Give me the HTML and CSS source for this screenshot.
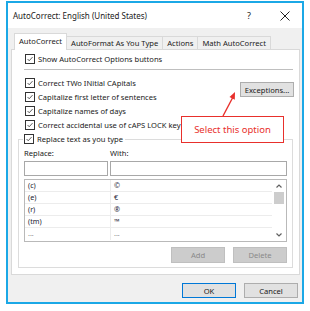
FILE: index.html
```html
<!DOCTYPE html>
<html>
<head>
<meta charset="utf-8">
<link rel="stylesheet" href="styles.css">
</head>
<body>
<div class="window">
  <div class="titlebar">
    <span class="title">AutoCorrect: English (United States)</span>
    <span class="help">?</span>
    <svg class="close" width="10" height="10" viewBox="0 0 10 10"><path d="M0.5 0.5 L9.5 9.5 M9.5 0.5 L0.5 9.5" stroke="#222" stroke-width="1" fill="none"/></svg>
  </div>
  <div class="tabs">
    <div class="tab selected">AutoCorrect</div>
    <div class="tab">AutoFormat As You Type</div>
    <div class="tab">Actions</div>
    <div class="tab">Math AutoCorrect</div>
  </div>
  <div class="panel">
    <div class="check-row show-row"><span class="cb"><svg width="10" height="10" viewBox="0 0 10 10"><path d="M2 5 L4 7.2 L8.2 2.6" stroke="#333" stroke-width="1" fill="none"/></svg></span>Show AutoCorrect Options buttons</div>
    <div class="sep"></div>
    <div class="options">
      <div class="option-list">
        <div class="check-row"><span class="cb"><svg width="10" height="10" viewBox="0 0 10 10"><path d="M2 5 L4 7.2 L8.2 2.6" stroke="#333" stroke-width="1" fill="none"/></svg></span>Correct TWo INitial CApitals</div>
        <div class="check-row"><span class="cb"><svg width="10" height="10" viewBox="0 0 10 10"><path d="M2 5 L4 7.2 L8.2 2.6" stroke="#333" stroke-width="1" fill="none"/></svg></span>Capitalize first letter of sentences</div>
        <div class="check-row"><span class="cb"><svg width="10" height="10" viewBox="0 0 10 10"><path d="M2 5 L4 7.2 L8.2 2.6" stroke="#333" stroke-width="1" fill="none"/></svg></span>Capitalize names of days</div>
        <div class="check-row"><span class="cb"><svg width="10" height="10" viewBox="0 0 10 10"><path d="M2 5 L4 7.2 L8.2 2.6" stroke="#333" stroke-width="1" fill="none"/></svg></span>Correct accidental use of cAPS LOCK key</div>
      </div>
      <div class="btn exceptions">Exceptions...</div>
    </div>
    <fieldset class="group">
      <legend class="check-row legend"><span class="cb"><svg width="10" height="10" viewBox="0 0 10 10"><path d="M2 5 L4 7.2 L8.2 2.6" stroke="#333" stroke-width="1" fill="none"/></svg></span>Replace text as you type</legend>
      <div class="labels"><span class="lbl-replace">Replace:</span><span>With:</span></div>
      <div class="inputs"><div class="input in-replace"></div><div class="input in-with"></div></div>
      <div class="list">
        <div class="rows">
          <div class="row"><span class="c1">(c)</span><span class="c2">©</span></div>
          <div class="row"><span class="c1">(e)</span><span class="c2">€</span></div>
          <div class="row"><span class="c1">(r)</span><span class="c2">®</span></div>
          <div class="row"><span class="c1">(tm)</span><span class="c2">™</span></div>
          <div class="row faint"><span class="c1">...</span><span class="c2">...</span></div>
        </div>
        <div class="scrollbar">
          <svg width="14" height="8" viewBox="0 0 14 8"><path d="M4.5 5.5 L7 3 L9.5 5.5" stroke="#606060" stroke-width="1.2" fill="none"/></svg>
          <div class="thumb"></div>
          <svg class="down" width="14" height="8" viewBox="0 0 14 8"><path d="M4.5 2.5 L7 5 L9.5 2.5" stroke="#606060" stroke-width="1.2" fill="none"/></svg>
        </div>
      </div>
      <div class="group-buttons">
        <div class="btn disabled">Add</div>
        <div class="btn disabled">Delete</div>
      </div>
    </fieldset>
  </div>
  <div class="dialog-buttons">
    <div class="btn ok">OK</div>
    <div class="btn">Cancel</div>
  </div>
  <div class="callout">Select this option</div>
  <svg class="arrow" width="20" height="26" viewBox="0 0 20 26"><path d="M3 25 L13 6" stroke="#e8302c" stroke-width="1.4" fill="none"/><path d="M15 1 L9.5 6 L14.8 8.8 Z" fill="#e8302c"/></svg>
</div>
</body>
</html>
```
FILE: styles.css
```css
* { box-sizing: border-box; }
html, body { margin: 0; padding: 0; background: #fff; }
body {
  font-family: "Noto Sans", "Open Sans", sans-serif;
  font-size: 7.6px;
  color: #1a1a1a;
}
.window {
  position: relative;
  margin: 1px 0 0 6px;
  width: 298px;
  height: 303px;
  border: 2px solid #1ba8e6;
  background: #f0f0f0;
  display: flex;
  flex-direction: column;
}
.titlebar {
  height: 25px;
  background: #fff;
  display: flex;
  align-items: center;
  padding-left: 5px;
  font-size: 8px;
  flex: none;
}
.title { flex: 1; }
.help { width: 12px; margin-right: 21px; font-size: 9px; }
.close { margin-right: 12px; }
.tabs {
  display: flex;
  align-items: flex-end;
  margin-top: 5px;
  padding-left: 6px;
  height: 16px;
  flex: none;
  position: relative;
  z-index: 1;
  white-space: nowrap;
}
.tab {
  height: 13px;
  line-height: 12px;
  padding: 0 4px;
  border: 1px solid #d9d9d9;
  border-bottom: none;
  background: #f0f0f0;
  margin-left: -1px;
}
.tab.selected {
  height: 17px;
  line-height: 15px;
  background: #fff;
  margin-left: 0;
  margin-bottom: -1px;
  padding: 0 4px;
  position: relative;
  z-index: 2;
}
.panel {
  margin: 0 2px 0 3px;
  height: 226px;
  background: #fff;
  border: 1px solid #d9d9d9;
  padding: 2px 6px 0 6px;
  flex: none;
}
.check-row {
  display: flex;
  align-items: center;
  height: 14px;
  line-height: 14px;
  padding-left: 7px;
  white-space: nowrap;
}
.cb {
  width: 10px;
  height: 10px;
  border: 1px solid #333;
  margin-right: 3px;
  display: flex;
  align-items: center;
  justify-content: center;
  flex: none;
}
.cb svg { display: block; }
.sep {
  margin: 3px 0 6px 6px;
  height: 1px;
  background: #bfbfbf;
}
.options {
  display: flex;
  justify-content: space-between;
  align-items: flex-start;
}
.exceptions {
  margin-top: 6px;
  margin-right: -1px;
  width: 59px;
  height: 16px;
}
.btn {
  display: flex;
  align-items: center;
  justify-content: center;
  background: #e1e1e1;
  border: 1px solid #adadad;
  height: 15px;
  width: 54px;
  font-size: 7.6px;
}
.btn.ok { border-color: #0078d7; }
.btn.disabled { background: #cccccc; border-color: #bfbfbf; color: #8a8a8a; }
.group {
  margin: 0;
  padding: 0 5px 5px 5px;
  border: 1px solid #dcdcdc;
  height: 136px;
  min-width: 0;
}
.legend {
  padding: 0 2px 0 1px;
  margin-left: -1px;
}
.labels {
  display: flex;
  margin-top: 1px;
  height: 13px;
  line-height: 13px;
}
.lbl-replace { width: 86px; }
.inputs {
  display: flex;
  gap: 2px;
  margin-top: 1px;
}
.input {
  height: 15px;
  border: 1px solid #a8a8a8;
  background: #fff;
}
.in-replace { width: 84px; }
.in-with { flex: 1; }
.list {
  display: flex;
  margin-top: 3px;
  height: 63px;
  border: 1px solid #b9b9b9;
  background: #fff;
}
.rows { flex: 1; }
.row {
  display: flex;
  height: 12px;
  line-height: 11px;
  border-bottom: 1px solid #ececec;
  font-size: 7.2px;
  color: #1c2233;
}
.row.faint { color: #888; border-bottom: none; }
.c1 { width: 86px; padding-left: 3px; border-right: 1px solid #ececec; }
.c2 { padding-left: 3px; }
.scrollbar {
  width: 14px;
  display: flex;
  flex-direction: column;
  align-items: center;
  background: #fff;
}
.scrollbar svg { display: block; margin-top: 2px; }
.thumb {
  width: 10px;
  height: 12px;
  background: #cdcdcd;
  margin-top: 2px;
}
.scrollbar .down { margin-top: auto; margin-bottom: 2px; }
.group-buttons {
  display: flex;
  justify-content: flex-end;
  gap: 8px;
  margin-top: 5px;
}
.group-buttons .btn { height: 16px; }
.dialog-buttons {
  display: flex;
  justify-content: flex-end;
  gap: 8px;
  margin-top: 8px;
  padding-right: 4px;
}
.callout {
  position: absolute;
  left: 173px;
  top: 113px;
  width: 103px;
  height: 27px;
  background: #fff;
  border: 1px solid #e8302c;
  color: #e8302c;
  font-size: 9.5px;
  display: flex;
  align-items: center;
  justify-content: center;
  z-index: 5;
}
.arrow {
  position: absolute;
  left: 212px;
  top: 88px;
  z-index: 6;
}
```
